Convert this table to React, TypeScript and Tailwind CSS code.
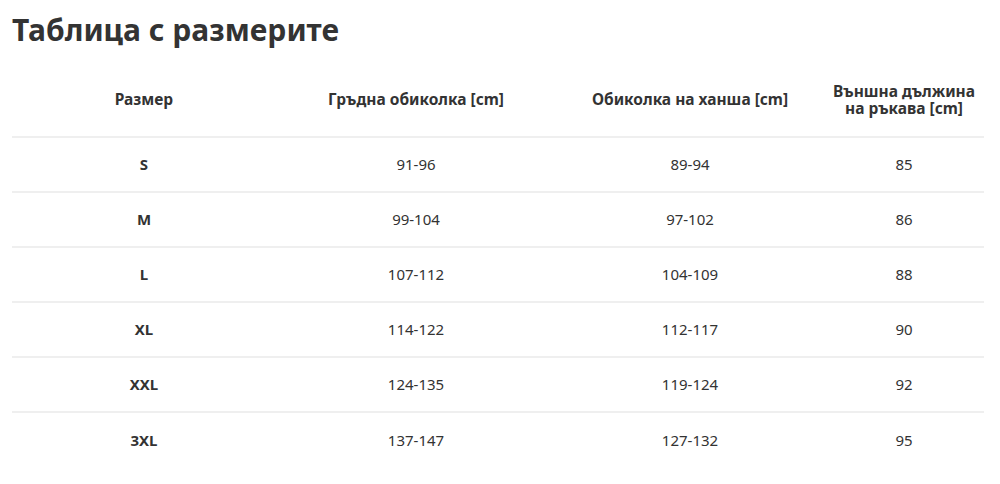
const rows = [
	["S", "91-96", "89-94", "85"],
	["M", "99-104", "97-102", "86"],
	["L", "107-112", "104-109", "88"],
	["XL", "114-122", "112-117", "90"],
	["XXL", "124-135", "119-124", "92"],
	["3XL", "137-147", "127-132", "95"],
];

export default function App() {
	return (
		<div className="bg-white px-3 pt-[10px] text-[#333] [font-family:'Noto_Sans',sans-serif]">
			<h1 className="text-[30px] leading-[40px] font-bold">Таблица с размерите</h1>
			<table className="mt-[13px] w-[972px] table-fixed border-collapse text-center text-[15px]">
				<colgroup>
					<col className="w-[264px]" />
					<col className="w-[280px]" />
					<col className="w-[268px]" />
					<col className="w-[160px]" />
				</colgroup>
				<thead>
					<tr className="h-[74px] border-b-2 border-[#efefef] text-[15.5px]">
						<th className="font-bold">Размер</th>
						<th className="font-bold">Гръдна обиколка [cm]</th>
						<th className="font-bold">Обиколка на ханша [cm]</th>
						<th className="font-bold leading-[17px]">
							Външна дължина
							<br />
							на ръкава [cm]
						</th>
					</tr>
				</thead>
				<tbody>
					{rows.map((r, i) => (
						<tr
							key={r[0]}
							className={
								i < rows.length - 1
									? "h-[55px] border-b-2 border-[#efefef]"
									: "h-[55px]"
							}
						>
							<td className="font-bold">{r[0]}</td>
							<td>{r[1]}</td>
							<td>{r[2]}</td>
							<td>{r[3]}</td>
						</tr>
					))}
				</tbody>
			</table>
		</div>
	);
}
